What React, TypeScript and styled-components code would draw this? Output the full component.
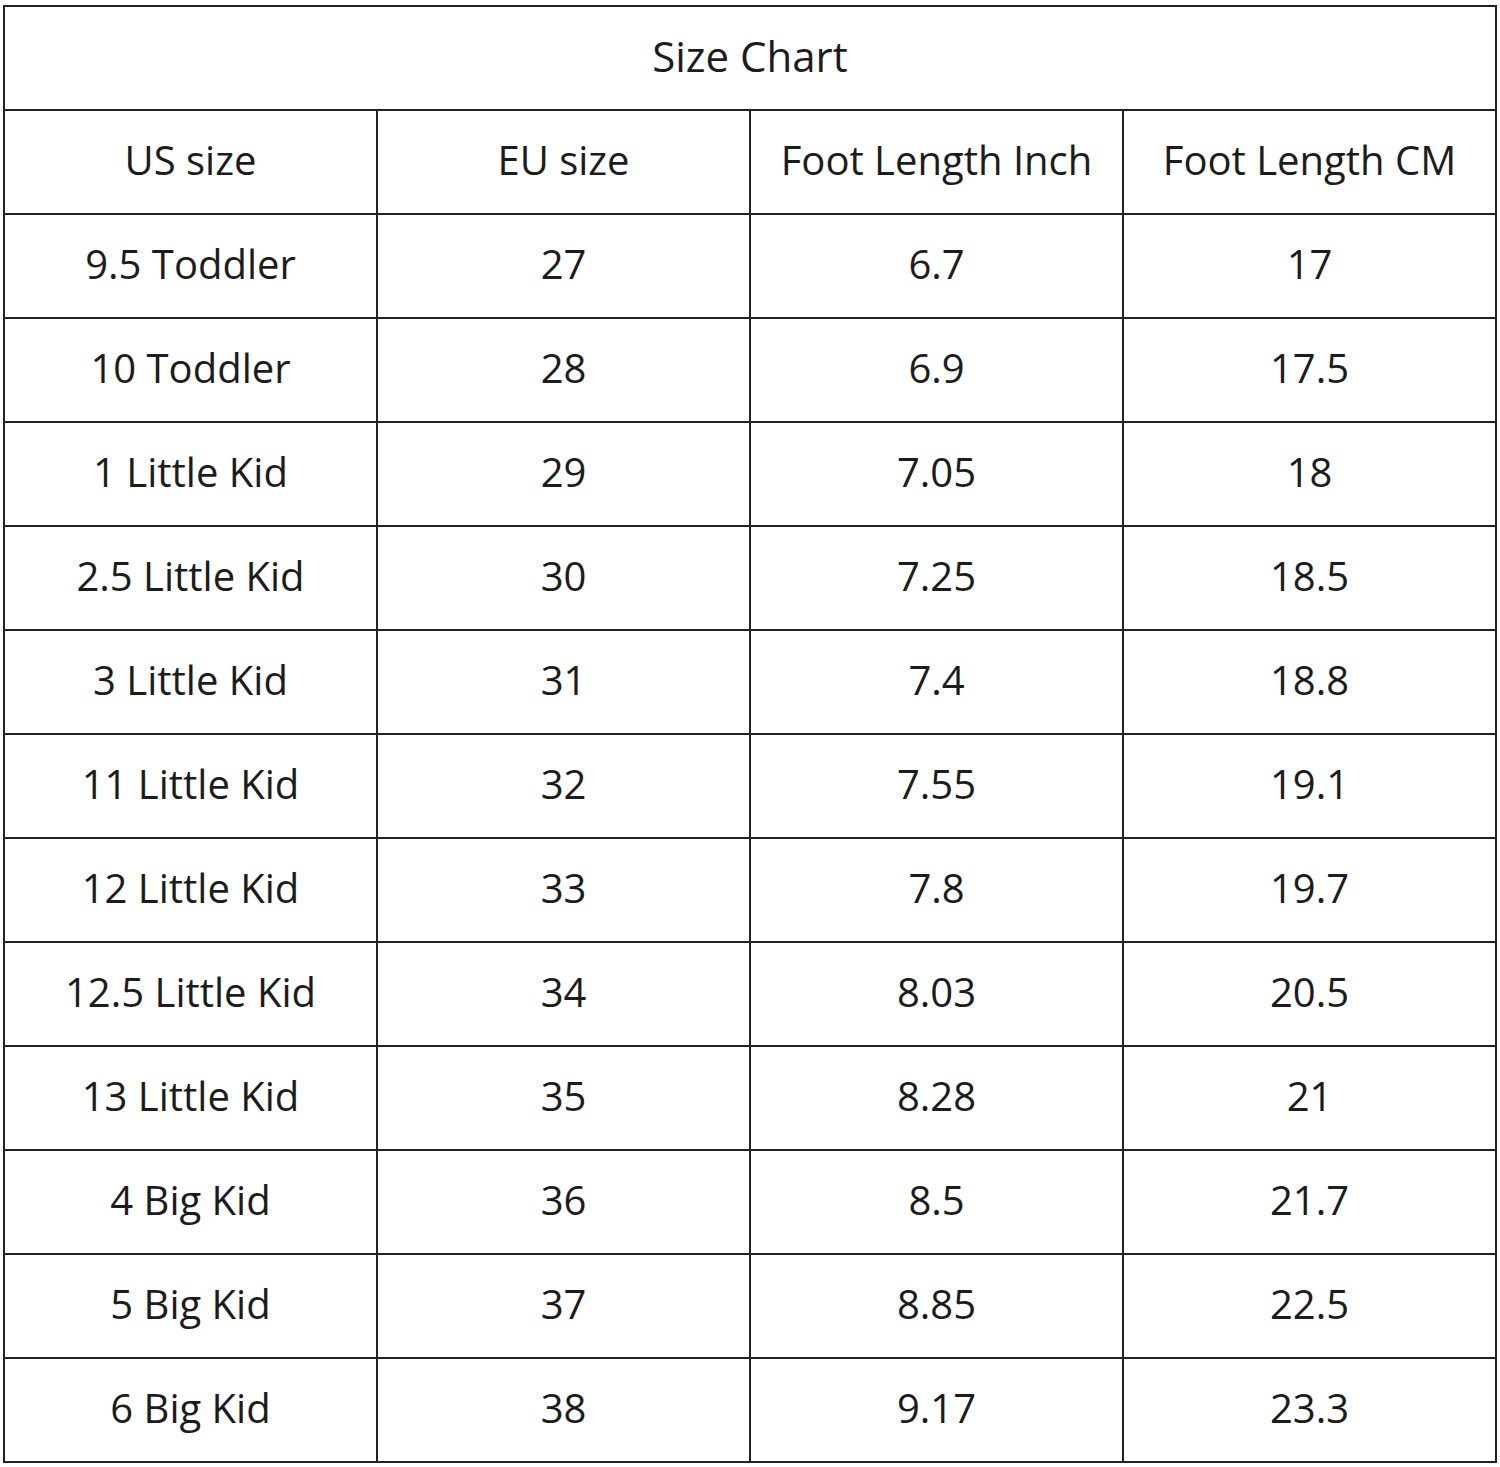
import React from 'react';
import styled, { createGlobalStyle } from 'styled-components';

const GlobalStyle = createGlobalStyle`
  html, body {
    margin: 0;
    padding: 0;
    background: #ffffff;
  }
`;

const COLUMNS = ['US size', 'EU size', 'Foot Length Inch', 'Foot Length CM'];

const ROWS: string[][] = [
  ['9.5 Toddler', '27', '6.7', '17'],
  ['10 Toddler', '28', '6.9', '17.5'],
  ['1 Little Kid', '29', '7.05', '18'],
  ['2.5 Little Kid', '30', '7.25', '18.5'],
  ['3 Little Kid', '31', '7.4', '18.8'],
  ['11 Little Kid', '32', '7.55', '19.1'],
  ['12 Little Kid', '33', '7.8', '19.7'],
  ['12.5 Little Kid', '34', '8.03', '20.5'],
  ['13 Little Kid', '35', '8.28', '21'],
  ['4 Big Kid', '36', '8.5', '21.7'],
  ['5 Big Kid', '37', '8.85', '22.5'],
  ['6 Big Kid', '38', '9.17', '23.3'],
];

export default function App() {
  return (
    <Page>
      <GlobalStyle />
      <Table>
        <tbody>
          <tr>
            <TitleCell colSpan={4}>Size Chart</TitleCell>
          </tr>
          <tr>
            {COLUMNS.map(col => (
              <Cell key={col}>{col}</Cell>
            ))}
          </tr>
          {ROWS.map(row => (
            <tr key={row[0]}>
              {row.map((value, i) => (
                <Cell key={i}>{value}</Cell>
              ))}
            </tr>
          ))}
        </tbody>
      </Table>
    </Page>
  );
}

const Page = styled.div`
  padding: 5px 3px 0 3px;
  width: 1500px;
  box-sizing: border-box;
`;

const Table = styled.table`
  border-collapse: collapse;
  width: 1494px;
  table-layout: fixed;
  font-family: "Open Sans", "Noto Sans", sans-serif;
  color: #1c1c1c;
`;

const Cell = styled.td`
  border: 2.5px solid #222;
  height: 104px;
  padding: 0 0 4px 0;
  box-sizing: border-box;
  text-align: center;
  vertical-align: middle;
  font-size: 40px;
  line-height: 1;
`;

const TitleCell = styled(Cell)`
  font-size: 42px;
`;
